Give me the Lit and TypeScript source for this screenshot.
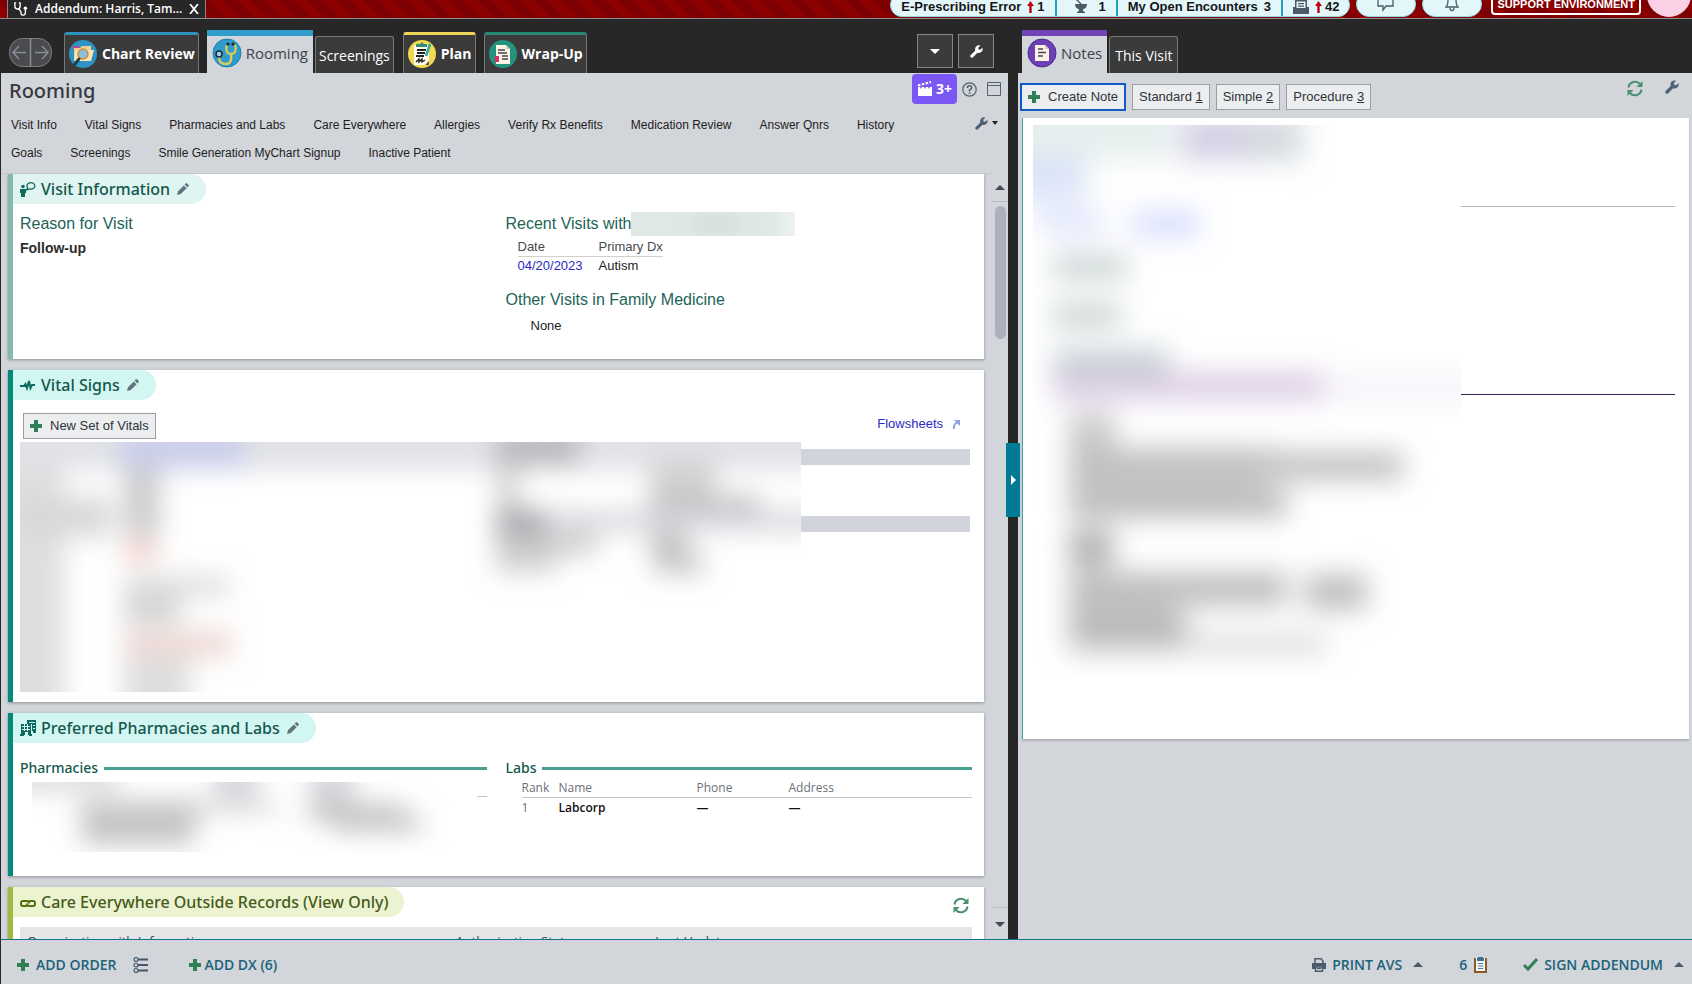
import { LitElement, html, css, svg, nothing } from "lit";
import { customElement, property } from "lit/decorators.js";

type Smudge = [number, number, number, number, string];

const wrenchPath =
  "M15.2 3.3 12.6 5.9 10.6 5.4 10.1 3.4 12.7.8C10.9.1 8.9.5 7.6 1.8 6.2 3.2 5.9 5.2 6.6 6.9L.9 12.3C.1 13 .1 14.200.9 15 1.700 15.800 3 15.800 3.700 15L9.200 9.400C10.900 10.100 12.900 9.800 14.200 8.400 15.500 7.100 15.900 5.100 15.200 3.300Z";

const wrench = (size: number, color: string) => html`<svg width=${size} height=${size} viewBox="0 0 16 16" aria-hidden="true">
  <path fill=${color} d=${wrenchPath} />
</svg>`;

const plus = () => html`<svg width="12" height="12" viewBox="0 0 12 12" aria-hidden="true">
  <path fill="#2f8155" d="M4 0h4v4h4v4H8v4H4V8H0V4h4z" />
</svg>`;

const refresh = () => html`<svg width="16" height="17" viewBox="0 0 16 17" aria-hidden="true">
  <g fill="none" stroke="#4a8f6d" stroke-width="2">
    <path d="M1.500 7.500A6.600 6.600 0 0 1 13 4" />
    <path d="M14.500 9.500A6.600 6.600 0 0 1 3 13" />
  </g>
  <path fill="#4a8f6d" d="M15.500 1v6H9.500zM.500 16v-6h6z" />
</svg>`;

const pencil = () => html`<svg width="12" height="12" viewBox="0 0 12 12" aria-hidden="true">
  <path fill="#63727f" d="M0 12 1 8.200 6.800 2.400 9.600 5.200 3.800 11zM7.600 1.600 8.900.3Q9.400-.1 9.900.3L11.700 2.100Q12.100 2.600 11.700 3.100L10.400 4.400z" />
</svg>`;

const upArrow = () => html`<svg width="7" height="12" viewBox="0 0 7 12" aria-hidden="true">
  <path fill="#c00010" d="M3.500 0 7 5H4.700v7H2.300V5H0z" />
</svg>`;

const triangle = (dir: "up" | "down" | "right", color: string) => {
  const d = dir === "up" ? "M0 7 5 2l5 5z" : dir === "down" ? "M0 3h10L5 8z" : "M3 0v10l5-5z";
  return html`<svg width="10" height="10" viewBox="0 0 10 10" aria-hidden="true"><path fill=${color} d=${d} /></svg>`;
};

const stethoscope = (size: number) => html`<svg width=${size} height=${size} viewBox="0 0 16 16" aria-hidden="true">
  <g fill="none" stroke="#fff" stroke-width="1.500">
    <path d="M2.500 1H1v3.500C1 7 2.500 8 4 8s3-1 3-3.500V1H5.500" />
    <path d="M5 8c2 1 3 2 3 4.500C8 14.500 9 15 10.500 15s2.500-.8 2.500-3V9" />
  </g>
  <circle cx="13" cy="7" r="2" fill="#fff" />
</svg>`;

const tabIcons: Record<string, unknown> = {
  chart: html`<svg width="30" height="30" viewBox="0 0 30 30" aria-hidden="true">
    <circle cx="15" cy="15" r="14" fill="#2d93c4" />
    <path fill="#c9408f" d="M5 7h6v3H5z" />
    <path fill="#f2cf93" d="M6 9h6l2-2h9v14H6z" />
    <path fill="#fbe3b5" d="M8 11h18l-3 11H6z" />
    <circle cx="15" cy="15" r="5" fill="#8cc0dc" stroke="#c9903f" stroke-width="1.500" />
    <path stroke="#243c50" stroke-width="3" stroke-linecap="round" d="m11 20-4 5" />
  </svg>`,
  rooming: html`<svg width="30" height="30" viewBox="0 0 30 30" aria-hidden="true">
    <circle cx="15" cy="15" r="14" fill="#2f9ccb" stroke="#1d7fae" />
    <g fill="none" stroke="#d9ce5a" stroke-width="2.300">
      <path d="M15 7c-2 5 0 9 4 9s6-4 4-9" />
      <path d="M19 16c1 7-1 10-5 10-5 0-7-3-7-7" />
    </g>
    <circle cx="16" cy="6" r="1.600" fill="#222" /><circle cx="21" cy="6" r="1.600" fill="#222" />
    <circle cx="7" cy="16" r="3" fill="#9fd5ec" stroke="#1f2d38" stroke-width="1.600" />
  </svg>`,
  plan: html`<svg width="30" height="30" viewBox="0 0 30 30" aria-hidden="true">
    <circle cx="15" cy="15" r="14" fill="#f1d94f" />
    <path fill="#fffdf2" d="M7 6h15v20H7z" />
    <path fill="#2f8f78" d="M9 5h4l2-2 2 2h3v3H9z" />
    <path stroke="#222" stroke-width="1.800" d="M10 11h9M10 14h8M9 17h8" />
    <path fill="none" stroke="#222" stroke-width="1.400" d="m9 23 3-3v3l3-3v3l3-2" />
    <path stroke="#2aa6a4" stroke-width="2.500" d="m23 5-4 12" />
    <path fill="#70502f" d="m18 26 4-4v4z" />
  </svg>`,
  wrap: html`<svg width="30" height="30" viewBox="0 0 30 30" aria-hidden="true">
    <circle cx="15" cy="15" r="14" fill="#23937d" />
    <path fill="#fdf6e6" d="M8 6h10l4 4v15H8z" />
    <path fill="#d3c9b2" d="M18 6v4h4z" />
    <path stroke="#444" stroke-width="1.400" d="M10 11h7M10 14h9M14 17h6M14 20h6" />
    <path fill="#d92e63" d="M7 17h4v6H7z" />
  </svg>`,
  notes: html`<svg width="30" height="30" viewBox="0 0 30 30" aria-hidden="true">
    <circle cx="15" cy="15" r="14" fill="#6d3fb5" stroke="#4d2a8c" />
    <path fill="#fbf0e4" d="M8 7h10l4 4v12H8z" />
    <path fill="#d9c8c4" d="M18 7v4h4z" />
    <path stroke="#4d4358" stroke-width="1.400" d="M11 11h5M11 14.500h8M11 18h5" />
  </svg>`,
};

const sectionIcons: Record<string, unknown> = {
  visit: html`<svg width="16" height="16" viewBox="0 0 16 16" aria-hidden="true">
    <circle cx="3" cy="5.500" r="1.800" fill="#0c6b5d" /><path fill="#0c6b5d" d="M0 8h6v4H5v4H1v-4H0z" />
    <path fill="none" stroke="#0c6b5d" stroke-width="1.300" d="M6.500 9 7.700 6.800A4 3.200 0 1 1 10 8z" />
  </svg>`,
  vitals: html`<svg width="16" height="16" viewBox="0 0 16 16" aria-hidden="true">
    <path fill="none" stroke="#0c6b5d" stroke-width="2" d="M0 9h4l1.500-2 1.500 4 2-7 1.500 7L12 8h3" />
  </svg>`,
  pharmacy: html`<svg width="16" height="16" viewBox="0 0 16 16" aria-hidden="true">
    <path fill="#0c6b5d" d="M7 0h9v13h-3v-2h-1V4H7zM1 4h10v11H8v-3H5v3H1z" />
    <path stroke="#d2f6f1" d="M2 6.500h8M2 9.500h8M9 2.500h6M13 5.500h2M13 8.500h2M4.500 4v7M7.500 4v7" />
    <path fill="#0c6b5d" d="M0 14h4v2H0zM9 14h3v2H9z" />
  </svg>`,
  link: html`<svg width="16" height="16" viewBox="0 0 16 16" aria-hidden="true">
    <g fill="none" stroke="#55700f" stroke-width="2">
      <path d="M7 12H3Q1 12 1 10V9q0-2 2-2h4q2 0 2 2.500" /><path d="M9 7h4q2 0 2 2v1q0 2-2 2H9Q7 12 7 9.500" />
    </g>
  </svg>`,
};

@customElement("redacted-area")
export class RedactedArea extends LitElement {
  @property({ type: Number }) width = 100;
  @property({ type: Number }) height = 100;
  @property({ type: Number }) spread = 8;
  @property({ attribute: false }) marks: Smudge[] = [];

  static styles = css`
    :host { display: block; flex: none; }
    svg { display: block; }
  `;

  render() {
    return html`<svg width=${this.width} height=${this.height} viewBox="0 0 ${this.width} ${this.height}" aria-hidden="true">
      <defs><filter id="soft" x="-50%" y="-50%" width="200%" height="200%" color-interpolation-filters="sRGB">
        <feGaussianBlur stdDeviation=${this.spread} />
      </filter></defs>
      <g filter="url(#soft)">
        ${this.marks.map(([x, y, w, h, c]) => svg`<rect x=${x} y=${y} width=${w} height=${h} fill=${c} />`)}
      </g>
    </svg>`;
  }
}

@customElement("chart-section")
export class ChartSection extends LitElement {
  @property() heading = "";
  @property() icon = "";
  @property() tone = "teal";
  @property({ type: Boolean }) editable = false;

  static styles = css`
    :host { display: block; flex: none; }
    .card {
      background: #fff;
      border-left: 5px solid #058a7a;
      box-shadow: 0 1px 3px #8d9096;
    }
    .pale { border-left-color: #85b8b0; }
    .olive { border-left-color: #a3b840; }
    .head { display: flex; justify-content: space-between; align-items: center; height: 30px; }
    .pill {
      display: flex;
      align-items: center;
      gap: 5px;
      height: 30px;
      padding: 0 15px 0 7px;
      border-radius: 0 15px 15px 0;
      background: #d2f6f1;
      color: #14584e;
    }
    .pale .pill { background: #e0f4f1; }
    .olive .pill { background: #ecf3d0; color: #465a1c; }
    h2 { margin: 0; font: 500 16px/24px "Noto Sans", "Open Sans", sans-serif; white-space: nowrap; }
    button { display: flex; padding: 2px; border: 0; background: none; }
  `;

  render() {
    return html`<section class="card ${this.tone}">
      <div class="head">
        <div class="pill">
          ${sectionIcons[this.icon]}
          <h2>${this.heading}</h2>
          ${this.editable ? html`<button aria-label="Edit ${this.heading}">${pencil()}</button>` : nothing}
        </div>
        <slot name="action"></slot>
      </div>
      <slot></slot>
    </section>`;
  }
}

const navRows = [
  ["Visit Info", "Vital Signs", "Pharmacies and Labs", "Care Everywhere", "Allergies", "Verify Rx Benefits", "Medication Review", "Answer Qnrs", "History"],
  ["Goals", "Screenings", "Smile Generation MyChart Signup", "Inactive Patient"],
];

const vitalsMarks: Smudge[] = [
  [-60, -60, 920, 88, "#e0e2e6"],
  [100, -10, 124, 36, "#c9cdea"],
  [-60, 28, 104, 290, "#dedede"],
  [0, 55, 92, 40, "#d8d8d8"],
  [104, 26, 36, 68, "#cccccc"],
  [104, 98, 34, 22, "#f2cfcb"],
  [104, 134, 105, 20, "#dcdcdc"],
  [104, 154, 56, 28, "#d4d4d4"],
  [104, 188, 108, 28, "#eed9d6"],
  [104, 216, 66, 70, "#dedede"],
  [476, -10, 84, 32, "#b6b7ba"],
  [476, 22, 24, 46, "#d6d6d6"],
  [630, 18, 66, 36, "#d2d2d2"],
  [630, 54, 110, 18, "#bcbcbe"],
  [476, 68, 365, 22, "#d8dade"],
  [476, 68, 50, 34, "#a6a8ac"],
  [476, 92, 100, 20, "#cacaca"],
  [476, 112, 60, 18, "#cfcfcf"],
  [630, 90, 38, 26, "#c2c2c2"],
  [634, 112, 50, 20, "#c8c8c8"],
];

const pharmacyMarks: Smudge[] = [
  [-40, -20, 125, 30, "#dedede"],
  [182, -20, 44, 42, "#d4d6da"],
  [278, -20, 44, 42, "#d4d6da"],
  [48, 18, 122, 20, "#c8c8c8"],
  [50, 38, 112, 24, "#c2c2c2"],
  [170, 20, 80, 12, "#e0e0e0"],
  [276, 22, 96, 16, "#c0c0c0"],
  [300, 34, 90, 16, "#c6c6c6"],
];

const noteMarks: Smudge[] = [
  [-40, -40, 180, 74, "#e6efee"],
  [148, -10, 72, 46, "#d4d0e4"],
  [218, -10, 52, 46, "#d4dadf"],
  [-40, 32, 94, 36, "#dae3f8"],
  [-10, 68, 64, 26, "#ebeffc"],
  [12, 90, 60, 20, "#dfe5fc"],
  [100, 88, 66, 22, "#d0d8fc"],
  [20, 131, 74, 22, "#c4cfcf"],
  [20, 179, 68, 22, "#c4cfcf"],
  [20, 224, 116, 24, "#c6d0d4"],
  [20, 248, 270, 26, "#d9c9e3"],
  [290, 254, 190, 18, "#f1eef6"],
  [36, 288, 46, 34, "#c8c8c8"],
  [36, 322, 206, 6, "#d4d4d4"],
  [36, 328, 334, 26, "#bbbbbb"],
  [36, 354, 190, 10, "#d8d8d8"],
  [36, 364, 218, 28, "#b8b8b8"],
  [36, 404, 44, 38, "#b0b0b0"],
  [36, 448, 218, 32, "#bbbbbb"],
  [272, 450, 62, 34, "#bbbbbb"],
  [36, 480, 100, 8, "#d4d4d4"],
  [36, 488, 118, 26, "#b5b5b5"],
  [36, 514, 112, 14, "#cccccc"],
  [150, 510, 144, 18, "#d8d8d8"],
];

@customElement("app-root")
export class AppRoot extends LitElement {
  static styles = css`
    :host { display: block; height: 100vh; --ui: "Open Sans", "Noto Sans", sans-serif; --head: "Noto Sans", "Open Sans", sans-serif; --sans: "Liberation Sans", Arial, sans-serif; }
    * { box-sizing: border-box; }
    button { font: inherit; color: inherit; margin: 0; padding: 0; border: 0; background: none; }
    a { color: inherit; text-decoration: none; }
    svg { display: block; flex: none; }
    .app { display: flex; flex-direction: column; height: 100%; overflow: hidden; background: #272727; font: 13px/16px var(--sans); color: #1d1d1d; }

    .topbar {
      display: flex; justify-content: space-between; align-items: flex-end; flex: none; height: 19px; overflow: hidden;
      border-bottom: 1px solid #8f8f8f;
      background: repeating-linear-gradient(45deg, #8d0000 0 10px, #7c0003 10px 20px);
    }
    .patient { display: flex; align-items: center; gap: 7px; height: 24px; margin: 0 0 -1px 7px; padding: 4px 6px 0; background: #272727; border: 1px solid #9a8080; border-width: 0 1px; color: #fff; font: 600 12px/16px var(--ui); }
    .status { display: flex; align-items: flex-end; gap: 6px; height: 24px; padding: 0 1px 1px 0; font: 700 13px/16px var(--sans); color: #161616; }
    .capsule { display: flex; height: 24px; border-radius: 14px; background: #e3f7fb; border: 1px solid #8fdbe8; overflow: hidden; }
    .capsule > button { display: flex; align-items: center; gap: 6px; padding: 4px 10px 0; white-space: nowrap; }
    .capsule > button + button { border-left: 2px solid #1ea2c4; }
    .count { display: flex; align-items: center; gap: 3px; }
    .round { display: flex; justify-content: center; align-items: center; width: 60px; height: 26px; border-radius: 14px; background: #e3f7fb; border: 1px solid #8fdbe8; }
    .env { margin: 0 0 2px 3px; padding: 0 4px 1px; border: 2px solid #fff; border-radius: 4px; color: #fff; font: 700 11px/16px var(--sans); white-space: nowrap; }
    .avatar { width: 44px; height: 44px; border-radius: 50%; background: #fbd0e4; }

    .main { display: grid; grid-template-columns: minmax(0, 1008fr) 10px minmax(0, 674fr); flex: 1; min-height: 0; }
    .col { display: flex; flex-direction: column; min-width: 0; min-height: 0; }
    .strip { display: flex; align-items: flex-end; flex: none; height: 54px; font: 15px/20px var(--ui); color: #fff; }
    .strip.left { padding: 0 14px 0 9px; }
    .strip.right { padding-left: 4px; gap: 2px; }
    .history { display: flex; margin: 0 12px 6px 0; }
    .tab { display: flex; align-items: center; gap: 4px; height: 41px; padding: 0 3px; background: #3b3b3b; border: 1px solid #777; border-bottom: 0; border-radius: 3px 3px 0 0; white-space: nowrap; }
    .tab.bold { font-weight: 700; font-size: 14px; margin-right: 8px; }
    .tab.blue { border-top: 3px solid #2f8fbd; }
    .tab.yellow { border-top: 3px solid #ecd75a; }
    .tab.green { border-top: 3px solid #2a8a76; }
    .tab.plain { height: 37px; font-size: 14px; font-weight: 500; padding: 2px 5px 0; }
    .tab.screen { margin: 0 9px 0 2px; padding: 2px 3px 0; }
    .tab.current { height: 43px; padding: 0 5px 4px; background: #d2d5da; color: #40434c; border: 0; border-top: 6px solid #2f9ccb; border-radius: 0; }
    .tab.violet { border-top-color: #7145b8; }
    .tools { display: flex; gap: 5px; margin-left: auto; padding-bottom: 5px; }
    .tool { display: flex; align-items: center; justify-content: center; width: 36px; height: 34px; background: #3b3b3b; border: 1px solid #858585; }

    .panel { display: flex; flex-direction: column; flex: 1; min-height: 0; margin-left: 1px; background: #d2d5da; }
    .titlebar { display: flex; justify-content: space-between; height: 36px; padding: 1px 7px 0 8px; }
    h1 { margin: 0; font: 500 20px/34px var(--head); color: #363940; }
    .titletools, .windowtools { display: flex; align-items: flex-start; gap: 5px; }
    .windowtools { gap: 10px; }
    .titletools button { display: flex; align-items: center; height: 30px; }
    .titletools .clips { gap: 3px; padding: 0 5px; border-radius: 4px; background: #7b57f5; color: #fff; font: 700 14px/16px var(--ui); }
    .nav { display: flex; justify-content: space-between; padding: 2px 10px 0; font-size: 12px; height: 65px; }
    .links { display: flex; flex-direction: column; }
    .linkrow { display: flex; gap: 28px; height: 28px; align-items: center; white-space: nowrap; }
    .navtool { display: flex; align-items: center; gap: 4px; height: 24px; }

    .scroller { display: flex; flex: 1; min-height: 0; }
    .cards { display: flex; flex-direction: column; gap: 11px; flex: 1; min-width: 0; overflow: hidden; padding: 0 8px 0 7px; border-top: 1px solid #c4c6ca; margin-top: -1px; }
    .bar { display: flex; flex-direction: column; align-items: center; width: 16px; flex: none; }
    .step { display: flex; align-items: center; justify-content: center; width: 16px; height: 28px; border-bottom: 1px solid #b9bbc0; }
    .step.down { border-bottom: 0; border-top: 1px solid #b9bbc0; height: 32px; }
    .track { flex: 1; padding-top: 4px; }
    .thumb { width: 11px; height: 133px; border-radius: 6px; background: #aeb1bd; }

    .two { display: grid; grid-template-columns: minmax(0, 1fr) minmax(0, 1fr); gap: 19px; padding: 0 12px 0 7px; }
    .visit { padding-top: 8px; padding-bottom: 25px; }
    h3 { margin: 0; font: 400 16px/24px var(--sans); color: #1d6457; white-space: nowrap; }
    .reason { margin: 0; font-weight: 700; font-size: 14px; line-height: 24px; color: #2d2d2d; }
    .withname { display: flex; }
    table { border-collapse: collapse; text-align: left; }
    th, td { padding: 0; font-weight: 400; vertical-align: top; }
    .dx { margin: 2px 0 12px 12px; }
    .dx th { color: #4a4a4a; line-height: 18px; border-bottom: 1px solid #d4cfc8; }
    .dx td { line-height: 18px; padding-bottom: 1px; }
    .dx td:first-child, .dx th:first-child { padding-right: 16px; }
    .blue-link { color: #2a2ac4; }
    .none { margin: 6px 0 0 25px; line-height: 16px; }

    .actions { display: flex; justify-content: space-between; align-items: flex-start; padding: 13px 23px 3px 10px; }
    .btn { display: flex; align-items: center; gap: 8px; height: 26px; padding: 0 6px; border: 1px solid #9a9da1; background: #ebedef; color: #30343a; white-space: nowrap; }
    .flow { display: flex; align-items: center; gap: 9px; height: 22px; }
    .vitals { display: flex; padding: 0 14px 10px 7px; }
    .bands { display: flex; flex-direction: column; gap: 51px; flex: 1; padding-top: 7px; }
    .band { height: 16px; background: #d1d4da; }

    .pharm { padding-top: 14px; padding-bottom: 24px; }
    .ruled { display: flex; align-items: center; gap: 6px; font: 500 14px/22px var(--head); color: #14584e; }
    .rule { flex: 1; height: 3px; background: #479f8f; }
    .labs { width: calc(100% - 16px); margin: 0 0 0 16px; font: 12px/20px var(--ui); table-layout: fixed; }
    .labs th { color: #6c7079; border-bottom: 1px solid #c3c4c6; line-height: 18px; }
    .labs td { color: #111; font-weight: 600; }
    .labs .rank { width: 37px; color: #6c7079; font-weight: 400; }
    .labs .name { width: 138px; }
    .labs .phone { width: 92px; }
    .hidden { display: flex; margin: 3px 0 0 12px; }
    .stub { flex: 1; height: 15px; border-bottom: 1px solid #c3c4c6; }
    .refresh { display: flex; margin: 6px 15px 0 0; }
    .records { width: calc(100% - 19px); margin: 10px 12px 0 7px; background: #e4e5e7; color: #2d4b63; font: 13px/20px var(--ui); table-layout: fixed; }
    .records th { padding: 4px 7px 20px; }
    .records .org { width: 45%; }
    .records .auth { width: 21%; }

    .divider { position: relative; background: #272727; }
    .handle { position: absolute; left: -2px; top: 424px; width: 14px; height: 74px; display: flex; align-items: center; justify-content: center; background: #007a94; }

    .rpanel { flex: 1; display: flex; flex-direction: column; background: #d2d5da; padding: 0 3px 0 2px; }
    .rtools { display: flex; justify-content: space-between; height: 45px; padding: 10px 10px 0 0; }
    .notebtns { display: flex; gap: 6px; align-items: center; height: 28px; }
    .create { height: 28px; border: 2px solid #1259c9; }
    .corner { display: flex; align-items: flex-start; gap: 22px; margin-top: -3px; }
    .note { display: flex; margin-left: 2px; padding: 7px 14px 64px 10px; background: #fff; border-left: 1px solid #3fa79c; box-shadow: 0 2px 2px #b0b2b6; }
    .lines { flex: 1; display: flex; flex-direction: column; }
    .line { height: 82px; border-bottom: 1px solid #b5b7bb; }
    .line.purple { height: 188px; border-bottom: 1px solid #3d1f5a; }

    .footer { display: flex; align-items: center; flex: none; height: 45px; margin-left: 1px; padding: 5px 8px 0 16px; border-top: 1px solid #17708e; background: #d2d5da; color: #1b6379; font: 600 14px/20px var(--ui); }
    .footer button { display: flex; align-items: center; gap: 7px; white-space: nowrap; }
    .outline { margin: 0 41px 0 17px; }
    .footer .tight { gap: 3px; }
    .end { display: flex; align-items: center; margin-left: auto; gap: 36px; }
    .split { display: flex; align-items: center; gap: 11px; }
    .footer .split button { gap: 6px; }
  `;

  private tab(label: string, icon: string, cls: string) {
    return html`<button class="tab ${cls}">${icon ? tabIcons[icon] : nothing}<span>${label}</span></button>`;
  }

  private top() {
    return html`<header class="topbar">
      <button class="patient">${stethoscope(14)}<span>Addendum: Harris, Tam...</span>
        <svg width="10" height="10" viewBox="0 0 10 10" aria-hidden="true"><path stroke="#fff" stroke-width="1.800" d="m1 0 8 10M9 0 1 10" /></svg>
      </button>
      <div class="status">
        <div class="capsule">
          <button>E-Prescribing Error <span class="count">${upArrow()}1</span></button>
          <button><svg width="26" height="14" viewBox="-8 0 26 14" aria-hidden="true"><path fill="#4b5a66" d="M0 4h12q0 4-4 5.500V11l2 1v1H2v-1l2-1V9.500Q0 8 0 4zM1 0h2l4 4H5z" /></svg>1</button>
          <button>My Open Encounters <span>3</span></button>
          <button><svg width="16" height="14" viewBox="0 0 16 14" aria-hidden="true"><path fill="#4b5a66" fill-rule="evenodd" d="M0 7h2V0h12v7h2v7H0zm3.500-5.500V8h9V1.500zM5 3h6v1.200H5zm0 2.500h6v1.200H5z" /></svg><span class="count">${upArrow()}42</span></button>
        </div>
        <button class="round" aria-label="Messages"><svg width="18" height="16" viewBox="0 0 18 16" aria-hidden="true"><path fill="none" stroke="#4b5a66" stroke-width="1.300" d="M1-4h15v14H9l-3 4v-4H1z" /></svg></button>
        <button class="round" aria-label="Alerts"><svg width="14" height="16" viewBox="0 0 14 16" aria-hidden="true"><path fill="none" stroke="#4b5a66" stroke-width="1.300" d="M1 11q2-2 2-7 1-4 4-4t4 4q0 5 2 7zM5 12q0 2.500 2 2.500T9 12" /></svg></button>
        <span class="env">SUPPORT ENVIRONMENT</span>
        <div class="avatar"></div>
      </div>
    </header>`;
  }

  private left() {
    return html`<div class="col">
      <div class="strip left">
        <div class="history"><svg width="43" height="29" viewBox="0 0 43 29" aria-hidden="true">
          <rect x=".5" y=".5" width="42" height="28" rx="13" fill="#494b50" stroke="#7d7f82" />
          <path fill="none" stroke="#8a8d91" stroke-width="1.500" d="M21.500 0v29M17 14.500H4M10 8l-6 6.500 6 6.500M26 14.500h13M33 8l6 6.500-6 6.500" />
        </svg></div>
        ${this.tab("Chart Review", "chart", "bold blue")}
        ${this.tab("Rooming", "rooming", "current")}
        ${this.tab("Screenings", "", "plain screen")}
        ${this.tab("Plan", "plan", "bold yellow")}
        ${this.tab("Wrap-Up", "wrap", "bold green")}
        <div class="tools">
          <button class="tool" aria-label="More tabs">${triangle("down", "#fff")}</button>
          <button class="tool" aria-label="Tab settings">${wrench(13, "#fff")}</button>
        </div>
      </div>
      <div class="panel">
        <div class="titlebar">
          <h1>Rooming</h1>
          <div class="titletools">
            <button class="clips"><svg width="16" height="16" viewBox="0 0 16 16" aria-hidden="true"><path fill="#fff" fill-rule="evenodd" d="M1 6h2l1 2 1-2h2l1 2 1-2h2l1 2 1-2h2v9H1z" /><path stroke="#fff" stroke-width="2.200" stroke-dasharray="2.500 1.500" d="M1 4.500 14 1" /></svg>3+</button>
            <div class="windowtools">
              <button aria-label="Help"><svg width="15" height="15" viewBox="0 0 15 15" aria-hidden="true"><g fill="none" stroke="#52626f" stroke-width="1.200"><circle cx="7.500" cy="7.500" r="6.700" /><path stroke-width="1.500" d="M5.300 6q0-2.200 2.200-2.200T9.700 5.800Q9.700 7 7.500 8v1.500M7.500 10.500V12" /></g></svg></button>
              <button aria-label="Expand"><svg width="14" height="14" viewBox="0 0 14 14" aria-hidden="true"><path fill="none" stroke="#52626f" d="M.5.5h13v13H.5zM.5 3.500h13" /></svg></button>
            </div>
          </div>
        </div>
        <div class="nav">
          <nav class="links">${navRows.map((r) => html`<div class="linkrow">${r.map((t) => html`<a href="#">${t}</a>`)}</div>`)}</nav>
          <button class="navtool" aria-label="Customize">${wrench(13, "#4f6175")}<svg width="6" height="6" viewBox="0 0 6 6" aria-hidden="true"><path fill="#222" d="M0 1h6L3 5z" /></svg></button>
        </div>
        <div class="scroller">
          <div class="cards">${this.visit()}${this.vitals()}${this.pharmacies()}${this.outside()}</div>
          <div class="bar" aria-hidden="true">
            <div class="step">${triangle("up", "#42464d")}</div>
            <div class="track"><div class="thumb"></div></div>
            <div class="step down">${triangle("down", "#42464d")}</div>
          </div>
        </div>
      </div>
    </div>`;
  }

  private visit() {
    return html`<chart-section heading="Visit Information" icon="visit" tone="pale" editable>
      <div class="two visit">
        <div><h3>Reason for Visit</h3><p class="reason">Follow-up</p></div>
        <div>
          <div class="withname"><h3>Recent Visits with</h3>
            <redacted-area .width=${164} .height=${24} .marks=${[[-30, -30, 186, 90, "#dfe8e7"], [60, 4, 50, 16, "#d3dfdc"], [150, -10, 40, 50, "#edf2f1"]] as Smudge[]}></redacted-area>
          </div>
          <table class="dx">
            <tr><th>Date</th><th>Primary Dx</th></tr>
            <tr><td><a class="blue-link" href="#">04/20/2023</a></td><td>Autism</td></tr>
          </table>
          <h3>Other Visits in Family Medicine</h3>
          <p class="none">None</p>
        </div>
      </div>
    </chart-section>`;
  }

  private vitals() {
    return html`<chart-section heading="Vital Signs" icon="vitals" editable>
      <div class="actions">
        <button class="btn">${plus()}<span>New Set of Vitals</span></button>
        <a class="flow blue-link" href="#">Flowsheets
          <svg width="9" height="10" viewBox="0 0 9 10" aria-hidden="true"><path fill="none" stroke="#8ea0e6" stroke-width="2" d="M2 10Q1 4 7 3" /><path fill="#8ea0e6" d="M2 1h6v6z" /></svg></a>
      </div>
      <div class="vitals">
        <redacted-area .width=${781} .height=${250} .spread=${13} .marks=${vitalsMarks}></redacted-area>
        <div class="bands"><div class="band"></div><div class="band"></div></div>
      </div>
    </chart-section>`;
  }

  private pharmacies() {
    return html`<chart-section heading="Preferred Pharmacies and Labs" icon="pharmacy" editable>
      <div class="two pharm">
        <div>
          <div class="ruled">Pharmacies<span class="rule"></span></div>
          <div class="hidden"><redacted-area .width=${445} .height=${70} .spread=${13} .marks=${pharmacyMarks}></redacted-area><div class="stub"></div></div>
        </div>
        <div>
          <div class="ruled">Labs<span class="rule"></span></div>
          <table class="labs">
            <tr><th class="rank">Rank</th><th class="name">Name</th><th class="phone">Phone</th><th>Address</th></tr>
            <tr><td class="rank">1</td><td>Labcorp</td><td>—</td><td>—</td></tr>
          </table>
        </div>
      </div>
    </chart-section>`;
  }

  private outside() {
    return html`<chart-section heading="Care Everywhere Outside Records (View Only)" icon="link" tone="olive">
      <button slot="action" class="refresh" aria-label="Refresh outside records">${refresh()}</button>
      <table class="records">
        <tr><th class="org">Organization with Information</th><th class="auth">Authorization Status</th><th>Last Update</th></tr>
      </table>
    </chart-section>`;
  }

  private right() {
    return html`<div class="col">
      <div class="strip right">
        ${this.tab("Notes", "notes", "current violet")}
        ${this.tab("This Visit", "", "plain")}
      </div>
      <div class="rpanel">
        <div class="rtools">
          <div class="notebtns">
            <button class="btn create">${plus()}<span>Create Note</span></button>
            <button class="btn"><span>Standard <u>1</u></span></button>
            <button class="btn"><span>Simple <u>2</u></span></button>
            <button class="btn"><span>Procedure <u>3</u></span></button>
          </div>
          <div class="corner">
            <button aria-label="Refresh notes">${refresh()}</button>
            <button aria-label="Note settings">${wrench(14, "#4f6175")}</button>
          </div>
        </div>
        <div class="note">
          <redacted-area .width=${428} .height=${550} .spread=${14} .marks=${noteMarks}></redacted-area>
          <div class="lines"><div class="line"></div><div class="line purple"></div></div>
        </div>
      </div>
    </div>`;
  }

  private footer() {
    return html`<footer class="footer">
      <button>${plus()}ADD ORDER</button>
      <button class="outline" aria-label="Order list"><svg width="15" height="16" viewBox="0 0 15 16" aria-hidden="true"><g fill="none" stroke="#44586a" stroke-width="1.200"><circle cx="3" cy="2.500" r="2" /><circle cx="3" cy="8" r="2" /><circle cx="3" cy="13.500" r="2" /><path stroke-width="1.800" d="M5 2.500h10M5 8h10M5 13.500h10" /></g></svg></button>
      <button class="tight">${plus()}ADD DX (6)</button>
      <div class="end">
        <div class="split">
          <button><svg width="14" height="14" viewBox="0 0 14 14" aria-hidden="true"><path fill="none" stroke="#4a5b6b" stroke-width="1.500" d="M3 5V.8h6L11 3v2M3.500 9v4.200h7V9z" /><path fill="#4a5b6b" d="M0 5h14v6h-3V8.500H3V11H0zM5 10h4v1H5z" /></svg>PRINT AVS</button>
          <button aria-label="Print options">${triangle("up", "#4a5b6b")}</button>
        </div>
        <button>6<svg width="13" height="16" viewBox="0 0 13 16" aria-hidden="true"><path fill="#8a5a22" d="M0 1h13v15H0z" /><path fill="#f4f6f8" d="M2 1h9v13H2z" /><path fill="#3a6e93" d="M4 0h5v1h1v3H3V1h1z" /><path stroke="#4a7a98" d="M4 6.500h5M4 9h5M4 11.500h5" /></svg></button>
        <div class="split">
          <button><svg width="15" height="13" viewBox="0 0 15 13" aria-hidden="true"><path fill="none" stroke="#2f8155" stroke-width="3" d="m1 7 4 4 9-10" /></svg>SIGN ADDENDUM</button>
          <button aria-label="Sign options">${triangle("up", "#4a5b6b")}</button>
        </div>
      </div>
    </footer>`;
  }

  render() {
    return html`<div class="app">
      ${this.top()}
      <div class="main">
        ${this.left()}
        <div class="divider"><button class="handle" aria-label="Collapse side panel">${triangle("right", "#fff")}</button></div>
        ${this.right()}
      </div>
      ${this.footer()}
    </div>`;
  }
}
